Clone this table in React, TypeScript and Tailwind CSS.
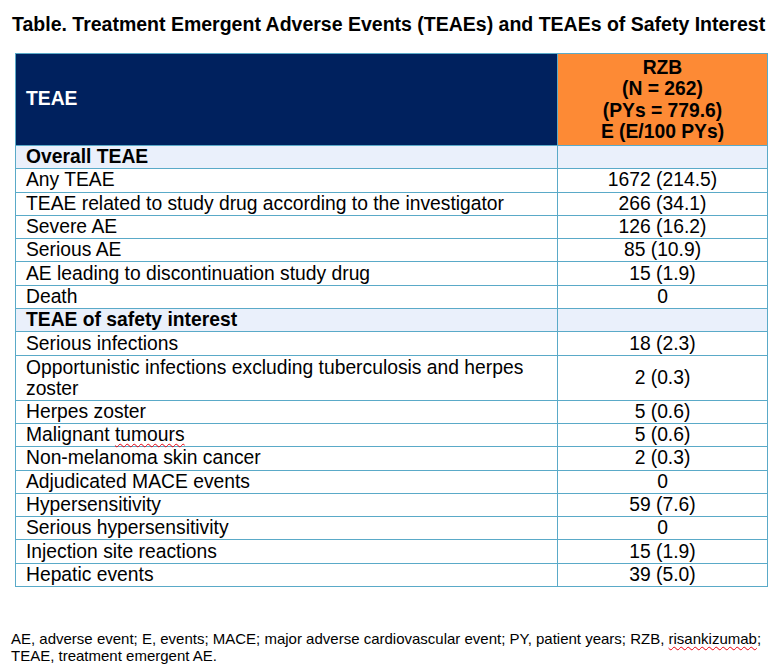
import React from 'react';

type Row = { label: React.ReactNode; value: string; section?: boolean; tall?: boolean };

const rows: Row[] = [
  { label: 'Overall TEAE', value: '', section: true },
  { label: 'Any TEAE', value: '1672 (214.5)' },
  { label: 'TEAE related to study drug according to the investigator', value: '266 (34.1)' },
  { label: 'Severe AE', value: '126 (16.2)' },
  { label: 'Serious AE', value: '85 (10.9)' },
  { label: 'AE leading to discontinuation study drug', value: '15 (1.9)' },
  { label: 'Death', value: '0' },
  { label: 'TEAE of safety interest', value: '', section: true },
  { label: 'Serious infections', value: '18 (2.3)' },
  {
    label: (
      <>
        Opportunistic infections excluding tuberculosis and herpes
        <br />
        zoster
      </>
    ),
    value: '2 (0.3)',
    tall: true,
  },
  { label: 'Herpes zoster', value: '5 (0.6)' },
  {
    label: (
      <>
        Malignant <span className="underline decoration-wavy decoration-red-600 decoration-1 underline-offset-2">tumours</span>
      </>
    ),
    value: '5 (0.6)',
  },
  { label: 'Non-melanoma skin cancer', value: '2 (0.3)' },
  { label: 'Adjudicated MACE events', value: '0' },
  { label: 'Hypersensitivity', value: '59 (7.6)' },
  { label: 'Serious hypersensitivity', value: '0' },
  { label: 'Injection site reactions', value: '15 (1.9)' },
  { label: 'Hepatic events', value: '39 (5.0)' },
];

const App: React.FC = () => {
  return (
    <div className="w-[780px] h-[669px] bg-white text-black font-['Liberation_Sans',Arial,sans-serif]">
      <h1 className="pl-[12px] pt-[13px] text-[19.5px] leading-[22px] font-bold whitespace-nowrap">
        Table. Treatment Emergent Adverse Events (TEAEs) and TEAEs of Safety Interest
      </h1>

      <table className="ml-[15px] mt-[18px] w-[753px] border-collapse text-[19.3px]">
        <thead>
          <tr className="h-[92px]">
            <th className="w-[542px] border border-[#5aaac8] bg-[#00215e] pl-[10px] text-left align-middle font-bold text-white">
              TEAE
            </th>
            <th className="border border-[#5aaac8] bg-[#fd8a35] text-center align-middle font-bold leading-[21.5px]">
              RZB
              <br />
              (N = 262)
              <br />
              (PYs = 779.6)
              <br />
              E (E/100 PYs)
            </th>
          </tr>
        </thead>
        <tbody>
          {rows.map((row, i) => (
            <tr key={i} className={row.section ? 'bg-[#eaf0fb]' : ''}>
              <td
                className={`border border-[#5aaac8] pl-[10px] ${
                  row.tall ? 'h-[45px] leading-[21px]' : 'h-[23.3px] leading-[22px]'
                } ${row.section ? 'font-bold' : ''}`}
              >
                {row.label}
              </td>
              <td className="border border-[#5aaac8] text-center leading-[22px]">{row.value}</td>
            </tr>
          ))}
        </tbody>
      </table>

      <p className="mt-[44px] pl-[11px] pr-[8px] text-[15px] leading-[16.5px] whitespace-nowrap">
        AE, adverse event; E, events; MACE; major adverse cardiovascular event; PY, patient years; RZB,{' '}
        <span className="underline decoration-wavy decoration-red-600 decoration-1 underline-offset-2">risankizumab</span>;
        <br />
        TEAE, treatment emergent AE.
      </p>
    </div>
  );
};

export default App;
